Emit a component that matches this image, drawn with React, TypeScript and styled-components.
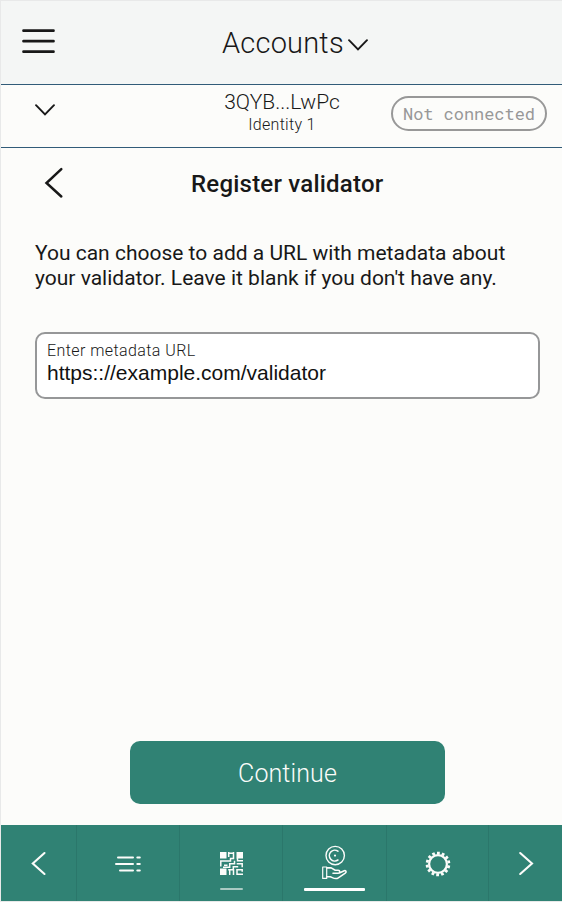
import React from "react";
import styled, { createGlobalStyle } from "styled-components";

const GlobalStyle = createGlobalStyle`
  * { box-sizing: border-box; }
  body { margin: 0; background: #fcfcfa; }
`;

const Screen = styled.div`
  width: 562px;
  height: 902px;
  display: flex;
  flex-direction: column;
  border: 1px solid #e8e9e9;
  border-right: 0;
  background: #fcfcfa;
  color: #181818;
  font-family: Roboto, "Liberation Sans", sans-serif;
`;

const Header = styled.header`
  height: 84px;
  flex: none;
  display: grid;
  grid-template-columns: 221px 1fr;
  background: #f4f6f5;
  border-bottom: 1px solid #315b78;
`;

const MenuButton = styled.button`
  width: 34px;
  height: 26px;
  margin: 27px 0 0 21px;
  padding: 0;
  border: 0;
  background: none;
  color: inherit;
`;

const HeaderTitle = styled.h1`
  display: flex;
  align-items: flex-start;
  gap: 4px;
  margin: 24px 0 0;
  font-size: 29px;
  line-height: 36px;
  font-weight: 300;
  letter-spacing: 0.2px;
`;

const Icon = styled.svg<{ $top?: number }>`
  display: block;
  flex: none;
  margin-top: ${(p) => p.$top ?? 0}px;
  overflow: visible;
  fill: none;
  stroke: currentColor;
`;

const AccountBar = styled.section`
  height: 63px;
  flex: none;
  display: grid;
  grid-template-columns: 173px 216px 156px;
  border-bottom: 1px solid #315b78;
`;

const AccountToggle = styled.div`
  padding: 19px 0 0 34px;
`;

const AccountName = styled.div`
  padding-top: 5px;
  text-align: center;
  font-weight: 300;
`;

const Address = styled.div`
  font-size: 21px;
  line-height: 25px;
`;

const Identity = styled.div`
  font-size: 16px;
  line-height: 20px;
  letter-spacing: 0.3px;
`;

const Status = styled.div`
  height: 35px;
  margin: 11px 0 0 1px;
  width: 156px;
  display: flex;
  align-items: center;
  justify-content: center;
  border: 2px solid #989898;
  border-radius: 18px;
  color: #989898;
  font: 17px "Roboto Mono", "Liberation Mono", monospace;
  letter-spacing: -0.05px;
  white-space: pre;
`;

const Main = styled.main`
  flex: 1;
  display: flex;
  flex-direction: column;
  padding: 0 22px 21px 34px;
`;

const TitleRow = styled.div`
  height: 70px;
  display: grid;
  grid-template-columns: 156px 1fr;
  padding-top: 20px;
`;

const BackButton = styled.button`
  width: 20px;
  height: 30px;
  margin-left: 10px;
  padding: 0;
  border: 0;
  background: none;
  color: inherit;
`;

const PageTitle = styled.h2`
  margin: 1px 0 0;
  font-size: 24px;
  line-height: 30px;
  font-weight: 500;
  letter-spacing: 0.22px;
`;

const Description = styled.p`
  margin: 23px 0 0;
  font-size: 21px;
  line-height: 25px;
  white-space: nowrap;
`;

const Field = styled.label`
  display: block;
  width: 505px;
  height: 67px;
  margin-top: 41px;
  padding: 7px 10px 5px;
  border: 2px solid #969798;
  border-radius: 10px;
  background: #fff;
`;

const FieldLabel = styled.span`
  display: block;
  font-size: 16px;
  line-height: 20px;
  font-weight: 300;
  letter-spacing: 0.42px;
`;

const FieldInput = styled.input`
  display: block;
  width: 100%;
  height: 24px;
  padding: 0;
  border: 0;
  outline: 0;
  background: none;
  color: #111;
  font: 21px "Liberation Sans", Arial, sans-serif;
`;

const ContinueButton = styled.button`
  width: 315px;
  height: 63px;
  margin: auto 0 0 95px;
  padding: 2px 0 0;
  border: 0;
  border-radius: 10px;
  background: #308274;
  color: #fcfcfa;
  font: 300 25px Roboto, sans-serif;
  letter-spacing: 0.1px;
`;

const NavBar = styled.nav`
  height: 76px;
  flex: none;
  display: grid;
  grid-template-columns: 76px 103px 103px 104px 102px 73px;
  background: #308274;
`;

const NavItem = styled.div<{ $last?: boolean }>`
  display: flex;
  flex-direction: column;
  align-items: center;
  border-right: ${(p) => (p.$last ? "0" : "1px solid #2b776b")};
  color: #fcfcfa;
`;

const Marker = styled.span<{ $active?: boolean }>`
  width: ${(p) => (p.$active ? 61 : 23)}px;
  height: ${(p) => (p.$active ? 3 : 2)}px;
  margin-top: ${(p) => (p.$active ? 8 : 13)}px;
  border-radius: 1px;
  background: ${(p) => (p.$active ? "#fff" : "#a9cac3")};
`;

const ChevronDown = ({ top = 0 }: { top?: number }) => (
  <Icon $top={top} width="20" height="12" viewBox="0 0 20 12" strokeWidth="1.9" strokeLinecap="round">
    <path d="M1 1.2 10 10.5 19 1.2" />
  </Icon>
);

const MenuIcon = () => (
  <Icon width="34" height="26" strokeWidth="2.7" strokeLinecap="round">
    <path d="M1.5 2.7H31.5M1.5 13.2H31.5M1.5 23.7H31.5" />
  </Icon>
);

const BackIcon = () => (
  <Icon width="20" height="30" strokeWidth="2.5" strokeLinecap="round">
    <path d="M16.3 1.2 1.5 15 16.3 28.5" />
  </Icon>
);

const ListIcon = () => (
  <Icon $top={30} width="28" height="18" strokeWidth="2" strokeLinecap="round">
    <path d="M4 2.5H19M2 9H19M6 15.5H19M23.3 2.5h2.5M23.3 9h2.5M23.3 15.5h2.5" />
  </Icon>
);

const QrIcon = () => (
  <Icon $top={27} width="23" height="23" strokeWidth="1.5">
    <path
      d="M0 0h6.5v6.5H0zM16.5 0H23v6.5h-6.5zM0 16.5h6.5V23H0z"
      fill="currentColor"
      stroke="none"
    />
    <path d="M8.2 1.2H13.8M8.7 0V5M13.5 0V6.5H10.5V9H.8V14.5M4 13.2h3.5M23 8.8H17.5V6M14.5 8.7v3H9.7v3.6H3M16.7 11.8h5.5v3.5M18.2 14.7H13.3v3.1M8.2 17.8h5.3V23M9.7 17v6M16.2 17.8h6v2M17 18v4.3h6" />
  </Icon>
);

const EarnIcon = () => (
  <Icon $top={20} width="26" height="35" strokeWidth="1.6" strokeLinecap="round" strokeLinejoin="round">
    <circle cx="13.2" cy="10.6" r="9.2" strokeWidth="1.4" />
    <path d="M15.9 6.2A5.4 5.4 0 1 0 15.9 15" />
    <circle cx="13" cy="10.6" r="1.1" fill="currentColor" stroke="none" />
    <path d="M.7 22h4v11.4h-4z" strokeWidth="1.2" />
    <path d="M4.7 22.9h4.5l4 2.3h3c2 0 2.1 3 0 3H11M17.3 28l5-2.3c1.8-.7 2.4 1.5 1 2.4l-7 4.7c-1.5 1-4.3.6-6-.2l-2-.9H4.7" />
  </Icon>
);

const teeth = Array.from({ length: 14 }, (_, i) => (i * 360) / 14);

const GearIcon = () => (
  <Icon $top={26} width="26" height="26" viewBox="-13 -13 26 26">
    <circle r="8.9" strokeWidth="2.2" />
    {teeth.map((angle) => (
      <path key={angle} d="M0-9.5V-12.3" strokeWidth="2.8" transform={`rotate(${angle + 2})`} />
    ))}
  </Icon>
);

const ArrowIcon = ({ forward = false }: { forward?: boolean }) => (
  <Icon $top={27} width="14" height="24" strokeWidth="2.1" strokeLinecap="round">
    <path d={forward ? "M1.2 1 13 11.5 1.2 22" : "M12.5 1 .8 11.5 12.5 22"} />
  </Icon>
);

export default function App() {
  return (
    <>
      <GlobalStyle />
      <Screen>
        <Header>
          <MenuButton aria-label="Menu"><MenuIcon /></MenuButton>
          <HeaderTitle>Accounts<ChevronDown top={14} /></HeaderTitle>
        </Header>
        <AccountBar>
          <AccountToggle><ChevronDown /></AccountToggle>
          <AccountName>
            <Address>3QYB...LwPc</Address>
            <Identity>Identity 1</Identity>
          </AccountName>
          <Status>Not connected</Status>
        </AccountBar>
        <Main>
          <TitleRow>
            <BackButton aria-label="Back"><BackIcon /></BackButton>
            <PageTitle>Register validator</PageTitle>
          </TitleRow>
          <Description>
            You can choose to add a URL with metadata about<br />
            your validator. Leave it blank if you don't have any.
          </Description>
          <Field>
            <FieldLabel>Enter metadata URL</FieldLabel>
            <FieldInput defaultValue="https:://example.com/validator" spellCheck={false} />
          </Field>
          <ContinueButton>Continue</ContinueButton>
        </Main>
        <NavBar>
          <NavItem><ArrowIcon /></NavItem>
          <NavItem><ListIcon /></NavItem>
          <NavItem><QrIcon /><Marker /></NavItem>
          <NavItem><EarnIcon /><Marker $active /></NavItem>
          <NavItem><GearIcon /></NavItem>
          <NavItem $last><ArrowIcon forward /></NavItem>
        </NavBar>
      </Screen>
    </>
  );
}
